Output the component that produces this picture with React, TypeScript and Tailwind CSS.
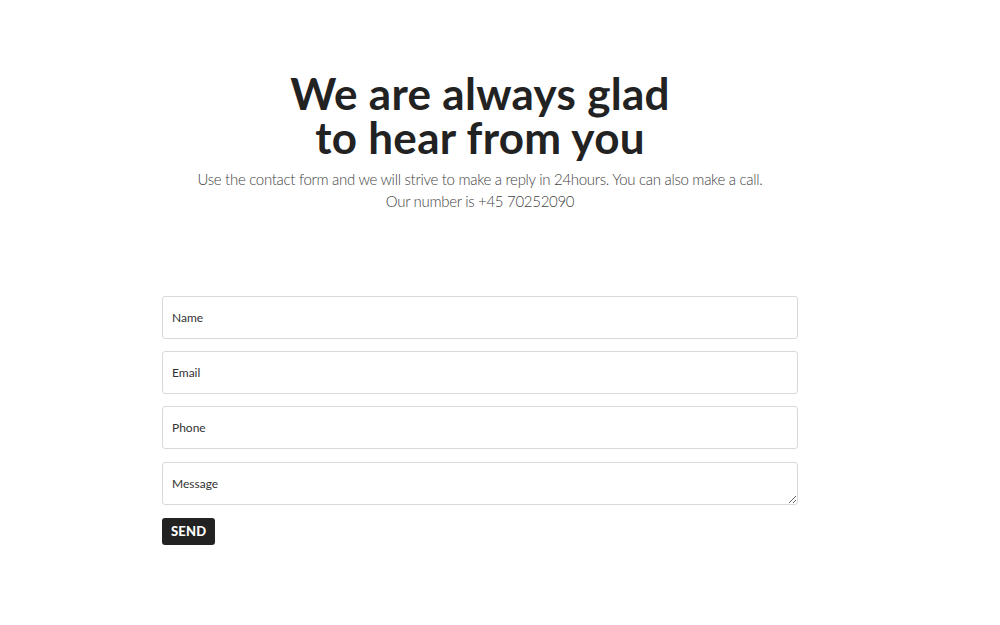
import React from "react";

export default function App() {
  const font = { fontFamily: '"Lato", "Liberation Sans", sans-serif' };
  return (
    <div className="min-h-[625px] w-full bg-white" style={font}>
      <div className="ml-[162px] w-[636px] pt-[71px]">
        <h1 className="text-center text-[44px] font-bold leading-[44px] tracking-[0.3px] text-[#222222]">
          We are always glad
          <br />
          to hear from you
        </h1>
        <p className="mt-[9px] text-center text-[15px] font-light leading-[22px] tracking-[-0.3px] text-[#444444]">
          Use the contact form and we will strive to make a reply in 24hours. You can also make a call.
          <br />
          Our number is +45 70252090
        </p>
        <form className="mt-[84px] flex flex-col gap-[12px]">
          <input
            placeholder="Name"
            className="h-[43px] w-full rounded-[3px] border border-[#d9d9d9] px-[9px] text-[12px] text-[#333] outline-none placeholder:text-[#333]"
          />
          <input
            placeholder="Email"
            className="h-[43px] w-full rounded-[3px] border border-[#d9d9d9] px-[9px] text-[12px] text-[#333] outline-none placeholder:text-[#333]"
          />
          <input
            placeholder="Phone"
            className="h-[43px] w-full rounded-[3px] border border-[#d9d9d9] px-[9px] text-[12px] text-[#333] outline-none placeholder:text-[#333]"
          />
          <textarea
            placeholder="Message"
            className="mt-[1px] h-[43px] w-full rounded-[3px] border border-[#d9d9d9] px-[9px] py-[14px] text-[12px] leading-[14px] text-[#333] outline-none placeholder:text-[#333]"
          />
          <div className="pt-[1px]">
            <button
              type="button"
              className="h-[27px] rounded-[3px] bg-[#222222] px-[9px] text-[13px] font-black tracking-[0.2px] text-white"
            >
              SEND
            </button>
          </div>
        </form>
      </div>
    </div>
  );
}
